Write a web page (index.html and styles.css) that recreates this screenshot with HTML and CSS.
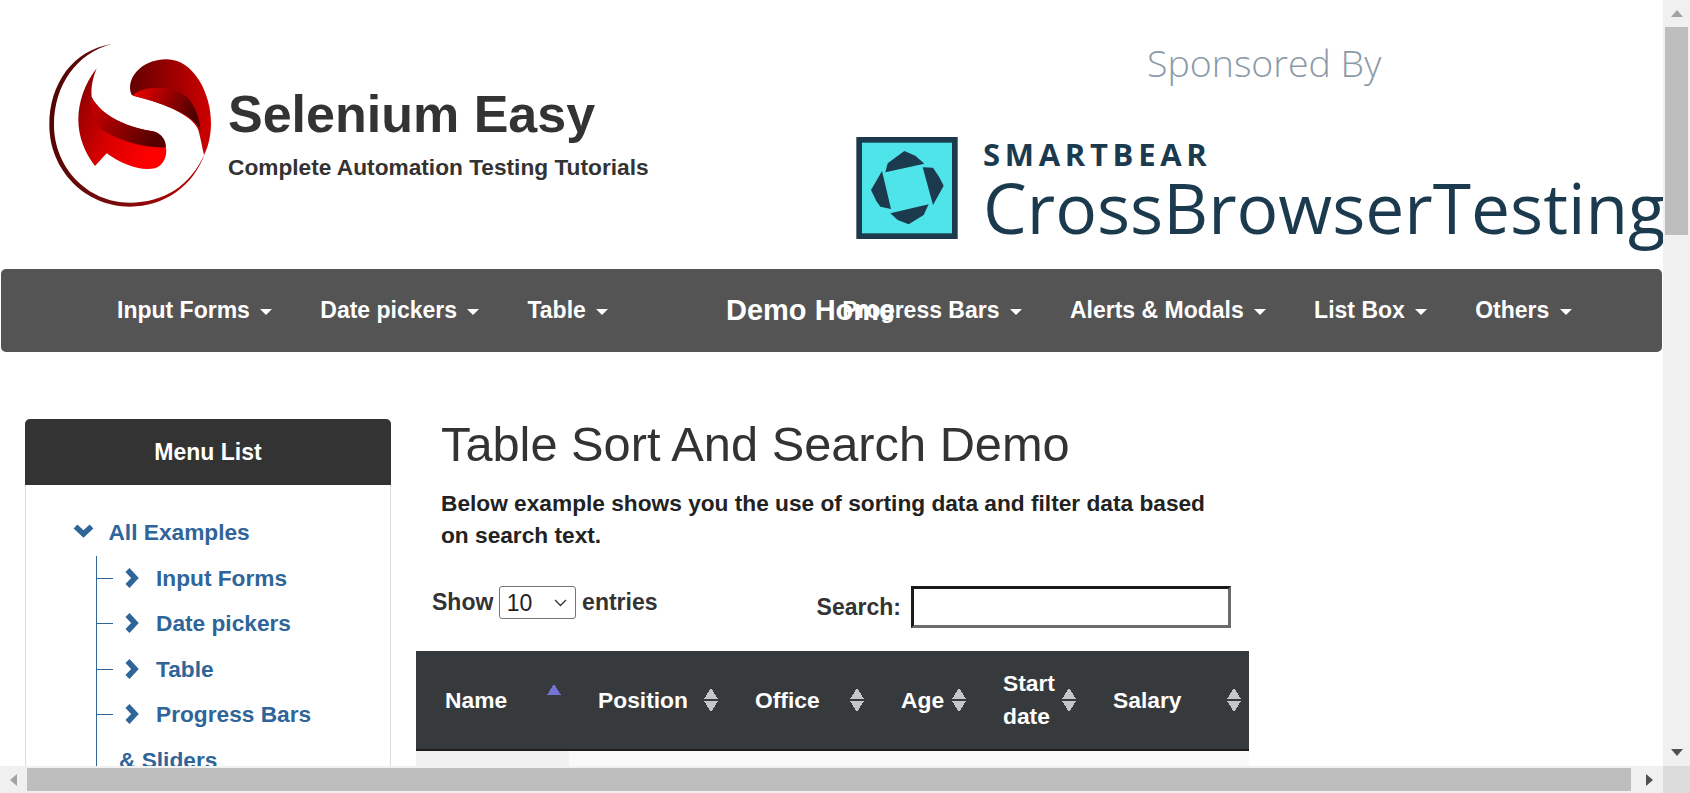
FILE: index.html
```html
<!DOCTYPE html>
<html lang="en">
<head>
  <meta charset="utf-8" />
  <title>Selenium Easy - Table Sort And Search Demo</title>
  <link rel="stylesheet" href="styles.css">
</head>
<body>
<div class="window">
  <div class="page">

    <header class="site-head">
      <div class="brand">
        <svg class="brand-logo" viewBox="0 0 600 570" width="200" height="190">
          <defs>
            <linearGradient id="ring" x1="0" y1="0" x2="1" y2="0.2">
              <stop offset="0" stop-color="#4d0505"/>
              <stop offset="0.6" stop-color="#7a0c0c"/>
              <stop offset="1" stop-color="#b00000"/>
            </linearGradient>
            <linearGradient id="upper" x1="0" y1="0" x2="1" y2="0">
              <stop offset="0" stop-color="#640000"/>
              <stop offset="1" stop-color="#cf0000"/>
            </linearGradient>
            <linearGradient id="upperIn" x1="0" y1="0" x2="1" y2="0.3">
              <stop offset="0" stop-color="#f50000"/>
              <stop offset="1" stop-color="#4f0000"/>
            </linearGradient>
            <linearGradient id="lower" x1="0" y1="0" x2="1" y2="0.5">
              <stop offset="0" stop-color="#7d0000"/>
              <stop offset="0.55" stop-color="#d80000"/>
              <stop offset="1" stop-color="#ff0000"/>
            </linearGradient>
            <linearGradient id="lowerIn" x1="0" y1="0" x2="1" y2="0.4">
              <stop offset="0" stop-color="#d00000"/>
              <stop offset="1" stop-color="#580000"/>
            </linearGradient>
          </defs>
          <path fill="url(#ring)" d="M245 42C130 60 58 160 58 285C58 420 165 530 300 530C400 530 490 470 525 370C480 470 400 518 300 518C170 518 72 410 72 285C72 165 140 70 245 42Z"/>
          <path fill="url(#upper)" d="M305 195C285 150 330 88 410 88C490 88 545 190 543 285C542 320 535 350 522 375C516 350 512 325 505 300C490 260 420 225 305 195Z"/>
          <path fill="url(#upperIn)" d="M308 197C330 170 420 160 470 200C495 225 508 265 512 300C490 255 420 225 308 197Z"/>
          <path fill="url(#lower)" d="M200 115C165 160 145 215 145 270C145 320 165 370 195 408L230 370C270 400 330 425 375 415C415 400 425 340 375 305C300 295 215 260 185 200C182 170 190 140 200 115Z"/>
          <path fill="url(#lowerIn)" d="M183 205C215 260 300 295 375 305C395 312 408 330 408 352C340 355 260 330 210 295C190 270 182 235 183 205Z"/>
        </svg>
        <div class="brand-text">
          <div class="brand-name">Selenium Easy</div>
          <div class="brand-tag">Complete Automation Testing Tutorials</div>
        </div>
      </div>
      <div class="sponsor">
        <div class="sponsor-title">Sponsored By</div>
        <div class="cbt">
          <svg class="cbt-icon" viewBox="48 36 304 306" width="102" height="102">
            <rect x="48" y="36" width="304" height="306" fill="#1b3a4e"/>
            <rect x="65" y="53" width="270" height="272" fill="#4fe3ea"/>
            <polygon fill="#1b3a4e" points="135,142 142,115 192,78 225,92 252,116"/>
            <polygon fill="#1b3a4e" points="247,127 278,128 296,155 310,182 278,240"/>
            <polygon fill="#1b3a4e" points="125,138 92,195 108,228 120,245 152,252"/>
            <polygon fill="#1b3a4e" points="150,265 265,238 250,270 205,298 172,285"/>
          </svg>
          <div class="cbt-text">
            <div class="cbt-small">SMARTBEAR</div>
            <div class="cbt-big">CrossBrowserTesting</div>
          </div>
        </div>
      </div>
    </header>

    <nav class="navbar">
      <a class="nav-home" href="#">Demo Home</a>
      <ul class="nav-list nav-left">
        <li>Input Forms <span class="caret"></span></li>
        <li>Date pickers <span class="caret"></span></li>
        <li>Table <span class="caret"></span></li>
      </ul>
      <ul class="nav-list nav-right">
        <li>Progress Bars <span class="caret"></span></li>
        <li>Alerts &amp; Modals <span class="caret"></span></li>
        <li>List Box <span class="caret"></span></li>
        <li>Others <span class="caret"></span></li>
      </ul>
    </nav>

    <div class="content">
      <aside class="panel">
        <div class="panel-head">Menu List</div>
        <div class="panel-body">
          <div class="tree-root">
            <svg class="chev-down" viewBox="0 0 21 14" width="21" height="14"><polyline points="2.5,2.5 10.5,10 18.5,2.5" fill="none" stroke="#2f6599" stroke-width="5.5"/></svg>
            <a href="#">All Examples</a>
          </div>
          <ul class="tree">
            <li><svg class="chev-right" viewBox="0 0 14 20" width="14" height="20"><polyline points="2.5,2 10,10 2.5,18" fill="none" stroke="#2f6599" stroke-width="5.5"/></svg><a href="#">Input Forms</a></li>
            <li><svg class="chev-right" viewBox="0 0 14 20" width="14" height="20"><polyline points="2.5,2 10,10 2.5,18" fill="none" stroke="#2f6599" stroke-width="5.5"/></svg><a href="#">Date pickers</a></li>
            <li><svg class="chev-right" viewBox="0 0 14 20" width="14" height="20"><polyline points="2.5,2 10,10 2.5,18" fill="none" stroke="#2f6599" stroke-width="5.5"/></svg><a href="#">Table</a></li>
            <li><svg class="chev-right" viewBox="0 0 14 20" width="14" height="20"><polyline points="2.5,2 10,10 2.5,18" fill="none" stroke="#2f6599" stroke-width="5.5"/></svg><a href="#">Progress Bars &amp; Sliders</a></li>
          </ul>
        </div>
      </aside>

      <main class="main">
        <h1 class="title">Table Sort And Search Demo</h1>
        <p class="intro">Below example shows you the use of sorting data and filter data based on search text.</p>

        <div class="controls">
          <label class="show">Show <select class="show-select"><option>10</option><option>25</option></select> entries</label>
          <label class="search">Search: <input class="search-input" type="text"></label>
        </div>

        <table class="data">
          <colgroup>
            <col class="c-name"><col class="c-pos"><col class="c-office"><col class="c-age"><col class="c-date"><col class="c-salary">
          </colgroup>
          <thead>
            <tr>
              <th><div class="th-in">Name <span class="sort sort-asc"></span></div></th>
              <th><div class="th-in">Position <span class="sort"></span></div></th>
              <th><div class="th-in">Office <span class="sort"></span></div></th>
              <th><div class="th-in">Age <span class="sort"></span></div></th>
              <th><div class="th-in">Start date <span class="sort"></span></div></th>
              <th><div class="th-in">Salary <span class="sort"></span></div></th>
            </tr>
          </thead>
          <tbody>
            <tr><td class="sorted"></td><td></td><td></td><td></td><td></td><td></td></tr>
          </tbody>
        </table>
      </main>
    </div>
  </div>

  <div class="vbar">
    <div class="bar-btn"><span class="arrow-up"></span></div>
    <div class="vthumb"></div>
    <div class="bar-fill"></div>
    <div class="bar-btn"><span class="arrow-down"></span></div>
  </div>
  <div class="hbar">
    <div class="bar-btn"><span class="arrow-left"></span></div>
    <div class="hthumb"></div>
    <div class="bar-fill"></div>
    <div class="bar-btn"><span class="arrow-right"></span></div>
  </div>
  <div class="corner"></div>
</div>
</body>
</html>
```

FILE: styles.css
```css
* {
  box-sizing: border-box;
}
html, body {
  margin: 0;
  padding: 0;
  height: 100%;
  overflow: hidden;
}
body {
  font-family: "Liberation Sans", Arial, sans-serif;
  color: #333;
  background: #fff;
}

/* window frame with the two scrollbars */
.window {
  display: grid;
  grid-template-columns: 1fr 27px;
  grid-template-rows: 1fr 27px;
  height: 793px;
  width: 1690px;
}
.page {
  overflow: hidden;
  min-width: 0;
  min-height: 0;
}
.vbar, .hbar {
  display: flex;
  background: #f0f0f0;
}
.vbar { flex-direction: column; }
.bar-btn {
  flex: 0 0 27px;
  height: 27px;
  display: flex;
  align-items: center;
  justify-content: center;
}
.bar-fill { flex: 1; }
.vthumb {
  height: 208px;
  margin: 0 2px;
  background: #bebebe;
}
.hthumb {
  width: 1604px;
  margin: 2px 0;
  background: #bebebe;
}
.corner { background: #dcdcdc; }
.arrow-up, .arrow-down, .arrow-left, .arrow-right {
  width: 0;
  height: 0;
  border-style: solid;
  border-color: transparent;
}
.arrow-up { border-width: 0 6.5px 7px; border-bottom-color: #a3a3a3; }
.arrow-down { border-width: 7px 6.5px 0; border-top-color: #505050; }
.arrow-left { border-width: 6.5px 7px 6.5px 0; border-right-color: #a3a3a3; }
.arrow-right { border-width: 6.5px 0 6.5px 7px; border-left-color: #505050; }

/* header */
.site-head {
  display: flex;
  height: 269px;
  white-space: nowrap;
}
.brand {
  flex: none;
  display: flex;
  width: 856px;
  padding: 30px 0 0 30px;
  align-items: flex-start;
}
.brand-logo { flex: none; }
.brand-text {
  padding-top: 54px;
  margin-left: -2px;
}
.brand-name {
  font-size: 52px;
  font-weight: bold;
  line-height: 60px;
}
.brand-tag {
  font-size: 22.7px;
  font-weight: bold;
  line-height: 30px;
  margin-top: 8px;
}
.sponsor {
  flex: none;
  padding-top: 38px;
}
.sponsor-title {
  font-family: "Open Sans", sans-serif;
  font-weight: 300;
  font-size: 37.5px;
  line-height: 50px;
  color: #8b9aa8;
  padding-left: 291px;
}
.cbt {
  display: flex;
  margin-top: 49px;
}
.cbt-icon { flex: none; }
.cbt-text {
  margin-left: 25px;
  color: #1b3a4e;
}
.cbt-small {
  font-family: "Open Sans", sans-serif;
  font-weight: 700;
  font-size: 31px;
  line-height: 34px;
  letter-spacing: 4.7px;
}
.cbt-big {
  font-family: "Open Sans", sans-serif;
  font-weight: 400;
  font-size: 69.5px;
  line-height: 72px;
}

/* navbar */
.navbar {
  position: relative;
  display: flex;
  height: 83px;
  margin: 0 1px;
  border-radius: 5px;
  background: #545454;
  color: #fff;
  font-size: 23px;
  font-weight: bold;
  white-space: nowrap;
}
.nav-list {
  display: flex;
  align-items: center;
  margin: 0;
  padding: 0;
  list-style: none;
}
.nav-left {
  margin-left: 116px;
  gap: 48px;
}
.nav-right {
  margin-left: 234px;
  gap: 48px;
}
.caret {
  display: inline-block;
  margin-left: 4px;
  vertical-align: middle;
  border-style: solid;
  border-width: 6px 6px 0;
  border-color: #fff transparent transparent;
}
.nav-home {
  position: absolute;
  left: 725px;
  top: 0;
  line-height: 83px;
  font-size: 29px;
  font-weight: bold;
  color: #fff;
  text-decoration: none;
}

/* content */
.content {
  display: flex;
  align-items: flex-start;
  padding: 67px 0 0 25px;
}
.panel {
  flex: none;
  width: 366px;
  height: 600px;
  border: 1px solid #ddd;
  border-radius: 5px;
}
.panel-head {
  height: 66px;
  line-height: 66px;
  margin: -1px -1px 0;
  text-align: center;
  font-size: 23px;
  font-weight: bold;
  color: #fff;
  background: #333;
  border-radius: 5px 5px 0 0;
}
.panel-body {
  padding-top: 25px;
  font-size: 22.7px;
  font-weight: bold;
  line-height: 45.5px;
}
.panel-body a {
  color: #2f6599;
  text-decoration: none;
}
.tree-root {
  padding-left: 47px;
}
.chev-down {
  margin-right: 9px;
  vertical-align: 2px;
}
.tree {
  margin: 0 0 0 70px;
  padding: 0;
  list-style: none;
  border-left: 1px solid #2f6599;
}
.tree li {
  position: relative;
  padding: 0 70px 0 22px;
}
.tree li::before {
  content: "";
  position: absolute;
  left: 0;
  top: 22px;
  width: 16px;
  border-top: 1px solid #2f6599;
}
.chev-right {
  margin: 0 17px 0 6px;
  vertical-align: -2px;
}

.main {
  flex: none;
  width: 833px;
  margin-left: 25px;
}
.title {
  margin: 0;
  padding-left: 25px;
  font-size: 48.75px;
  font-weight: normal;
  line-height: 50px;
}
.intro {
  margin: 19px 0 0;
  padding: 0 25px;
  font-size: 22.7px;
  font-weight: bold;
  line-height: 31.5px;
  color: #222;
}
.controls {
  display: flex;
  align-items: flex-start;
  margin-top: 35px;
  padding-left: 16px;
  font-size: 23px;
  font-weight: bold;
  color: #333;
}
.show {
  line-height: 33px;
}
.show-select {
  appearance: none;
  width: 77px;
  height: 33px;
  margin: 0 0 0 -1px;
  padding: 0 0 0 7px;
  font-family: "Liberation Sans", Arial, sans-serif;
  font-size: 23px;
  border: 1px solid #767676;
  border-radius: 3px;
  background: #fff url("data:image/svg+xml,%3Csvg xmlns='http://www.w3.org/2000/svg' width='13' height='8'%3E%3Cpolyline points='1,1 6.5,6.5 12,1' fill='none' stroke='%23333' stroke-width='1.3'/%3E%3C/svg%3E") no-repeat right 8px center;
  color: #222;
  vertical-align: top;
}
.search {
  display: flex;
  align-items: center;
  margin-left: 159px;
}
.search-input {
  width: 320px;
  height: 42px;
  margin-left: 10px;
  border-width: 3px;
  border-style: solid;
  border-color: #1a1a1a #6b6b6b #6b6b6b #1a1a1a;
  background: #fff;
}
.data {
  width: 833px;
  margin-top: 23px;
  table-layout: fixed;
  border-collapse: collapse;
}
.c-name { width: 153px; }
.c-pos { width: 157px; }
.c-office { width: 146px; }
.c-age { width: 102px; }
.c-date { width: 110px; }
.c-salary { width: 165px; }
.data th {
  height: 99px;
  padding: 0 8px 0 29px;
  background: #373a3d;
  border-bottom: 2px solid #1d1d1d;
  color: #fff;
  font-size: 22.8px;
  line-height: 33px;
  text-align: left;
}
.th-in {
  display: flex;
  align-items: center;
  justify-content: space-between;
}
.sort {
  flex: none;
  width: 14px;
  height: 24px;
  background:
    linear-gradient(to bottom right, transparent 50%, #c6c6c6 50%) 0 0 / 7px 11px no-repeat,
    linear-gradient(to bottom left, transparent 50%, #c6c6c6 50%) 7px 0 / 7px 11px no-repeat,
    linear-gradient(to top right, transparent 50%, #c6c6c6 50%) 0 13px / 7px 11px no-repeat,
    linear-gradient(to top left, transparent 50%, #c6c6c6 50%) 7px 13px / 7px 11px no-repeat;
}
.sort-asc {
  margin-top: -8px;
  background:
    linear-gradient(to bottom right, transparent 50%, #7373d6 50%) 0 0 / 7px 11px no-repeat,
    linear-gradient(to bottom left, transparent 50%, #7373d6 50%) 7px 0 / 7px 11px no-repeat;
}
.data td {
  height: 60px;
  background: #f9f9f9;
}
.data td.sorted {
  background: #f1f1f1;
}
```
